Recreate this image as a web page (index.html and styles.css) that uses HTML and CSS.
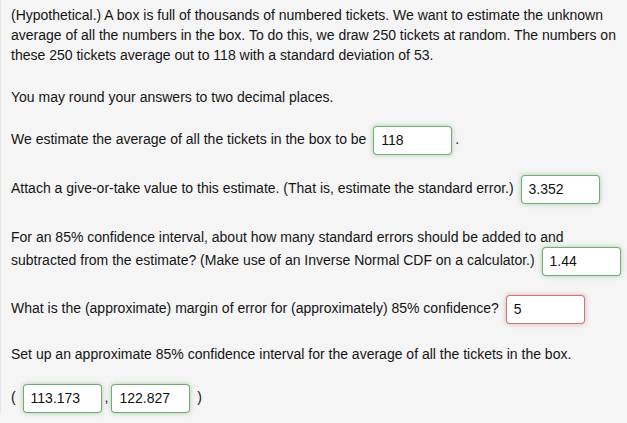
FILE: index.html
```html
<!DOCTYPE html>
<html>
<head>
<meta charset="utf-8">
<link rel="stylesheet" href="styles.css">
</head>
<body>
<div class="problem">
<p class="para p1">(Hypothetical.) A box is full of thousands of numbered tickets. We want to estimate the unknown average of all the numbers in the box. To do this, we draw 250 tickets at random. The numbers on these 250 tickets average out to 118 with a standard deviation of 53.</p>
<p class="para p2">You may round your answers to two decimal places.</p>
<p class="para p3">We estimate the average of all the tickets in the box to be <span class="ans correct">118</span>.</p>
<p class="para p4">Attach a give-or-take value to this estimate. (That is, estimate the standard error.) <span class="ans correct">3.352</span></p>
<p class="para p5">For an 85% confidence interval, about how many standard errors should be added to and subtracted from the estimate? (Make use of an Inverse Normal CDF on a calculator.) <span class="ans correct">1.44</span></p>
<p class="para p6">What is the (approximate) margin of error for (approximately) 85% confidence? <span class="ans incorrect">5</span></p>
<p class="para p7">Set up an approximate 85% confidence interval for the average of all the tickets in the box.</p>
<p class="para p8">( <span class="ans correct">113.173</span>,<span class="ans correct">122.827</span> )</p>
</div>
</body>
</html>
```
FILE: styles.css
```css
html, body {
  margin: 0;
  padding: 0;
  background: #f5f5f5;
}
.problem {
  font-family: "Liberation Sans", Arial, sans-serif;
  font-size: 14px;
  line-height: 20px;
  color: #141414;
  border-left: 1px solid #e8e8e8;
  padding: 5px 0 0 10px;
  width: 615px;
}
.para {
  margin: 0 0 20px 0;
}
.p1 { margin-bottom: 22px; }
.p2 { margin-bottom: 19px; }
.p3 { margin-bottom: 20px; }
.p4 { margin-bottom: 23px; }
.p5 { margin-bottom: 19px; }
.p6 { margin-bottom: 20px; }
.p7 { margin-bottom: 20px; }
.ans {
  display: inline-block;
  box-sizing: border-box;
  width: 79px;
  height: 29px;
  line-height: 27px;
  padding: 0 7px;
  vertical-align: middle;
  background: #fff;
  border-radius: 4px;
  color: #111;
  margin: 0 3px;
}
.correct {
  border: 1px solid rgba(81, 153, 81, 0.8);
  box-shadow: 0 0 5px rgba(81, 153, 81, 0.45);
}
.incorrect {
  border: 1px solid rgba(191, 84, 84, 0.8);
  box-shadow: 0 0 5px rgba(191, 84, 84, 0.45);
}
```
